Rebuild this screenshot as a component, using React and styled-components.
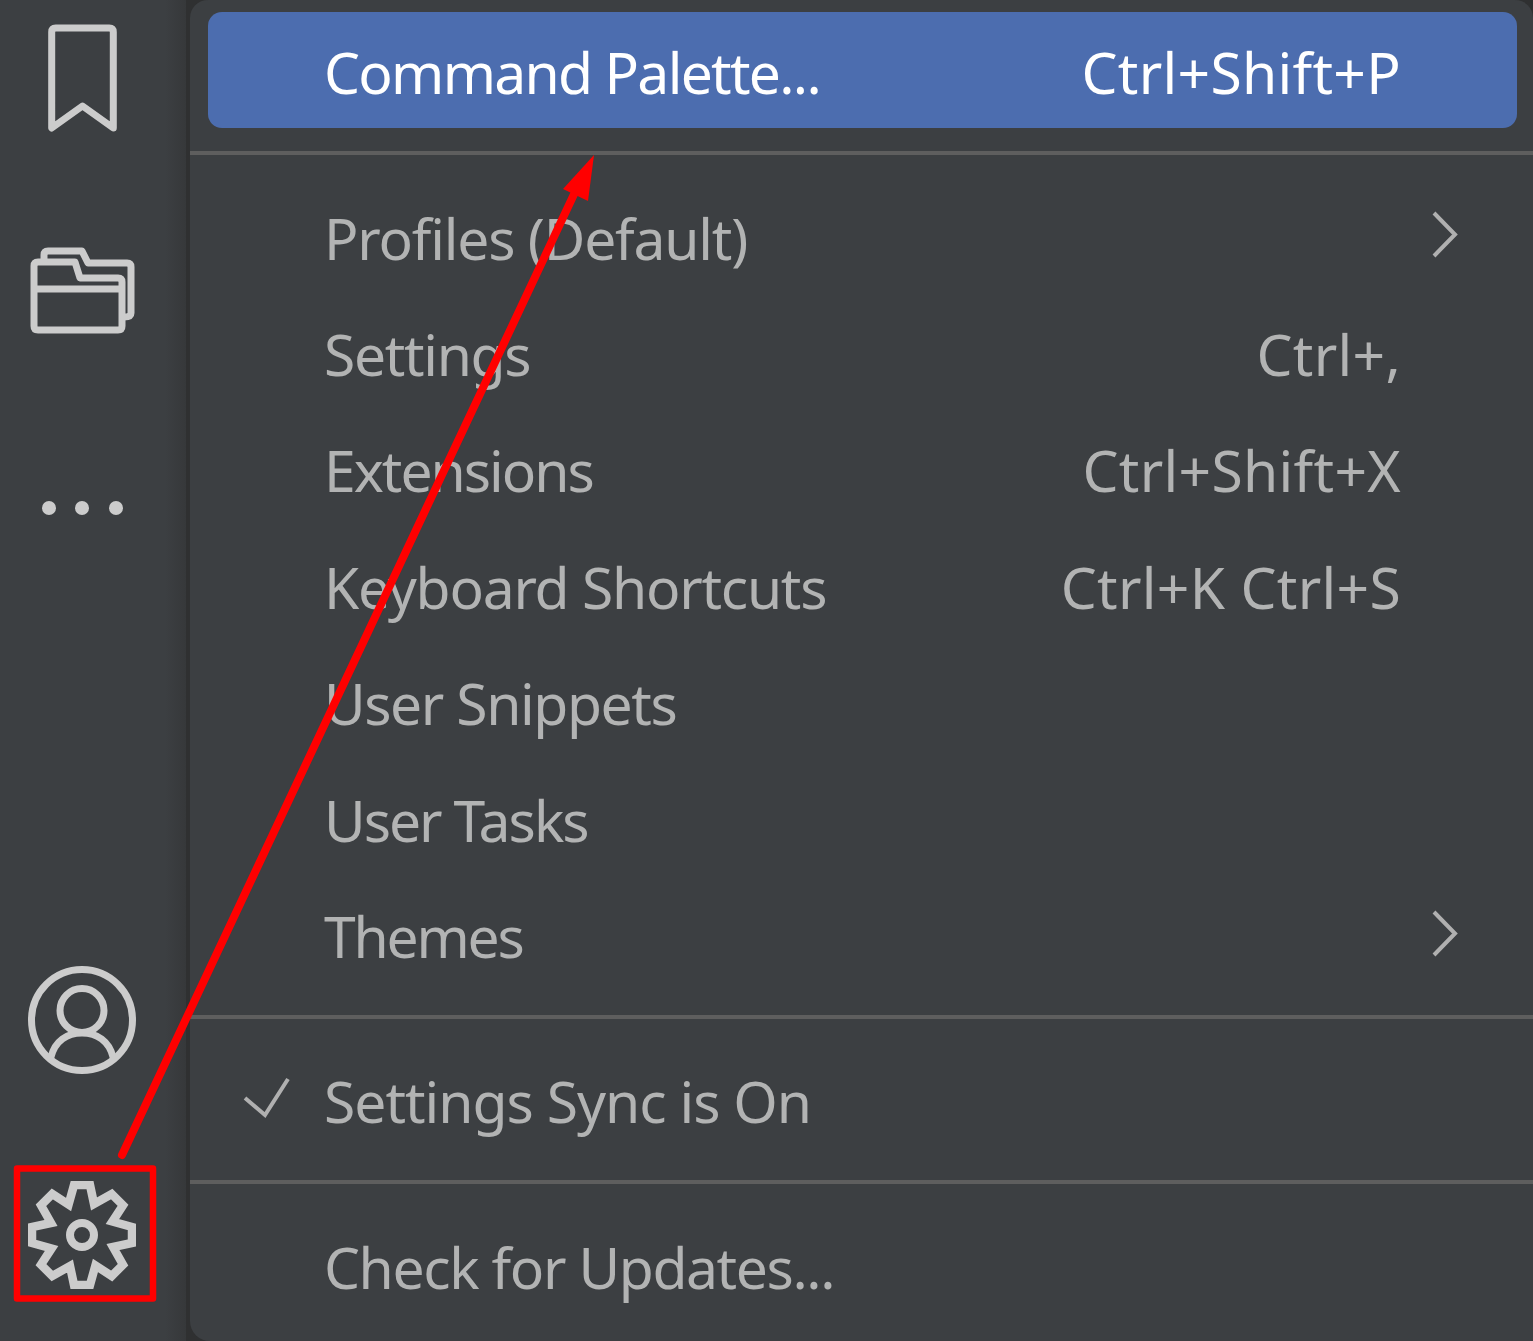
import React from "react";
import styled, { createGlobalStyle } from "styled-components";

const Global = createGlobalStyle`
  html, body { margin: 0; padding: 0; background: #2f3031; }
  #root { width: 1533px; height: 1341px; overflow: hidden; }
`;

const Window = styled.div`
  position: relative;
  display: flex;
  width: 1533px;
  height: 1341px;
  overflow: hidden;
  background: #2f3031;
  font-family: "Noto Sans", "Open Sans", sans-serif;
`;

const ActivityBar = styled.nav`
  flex: 0 0 186px;
  box-sizing: border-box;
  height: 100%;
  display: flex;
  flex-direction: column;
  justify-content: space-between;
  padding: 24px 0 52px 28px;
  background: linear-gradient(90deg, #3c3f42 0, #3c3f42 165px, #36383a 186px);
`;

const IconStack = styled.div`
  display: flex;
  flex-direction: column;
  gap: ${(p) => p.$gap}px;
`;

const BarIcon = styled.svg`
  display: block;
  width: 108px;
  height: 108px;
  fill: none;
  stroke: #cccccc;
  stroke-width: 7;
  stroke-linejoin: round;
  stroke-linecap: round;
`;

const GearOutline = styled.polygon`
  stroke-width: 8.5;
  stroke-linejoin: miter;
  stroke-miterlimit: 6;
`;

const GearHub = styled.circle`
  stroke-width: 8;
`;

const Menu = styled.section`
  flex: 1;
  margin-left: 4px;
  padding-top: 12px;
  display: flex;
  flex-direction: column;
  background: #3c3f42;
  border-radius: 18px 18px 0 20px;
`;

const Row = styled.div`
  display: grid;
  grid-template-columns: 116px 1fr auto 116px;
  align-items: center;
  box-sizing: border-box;
  height: ${(p) => (p.$active ? "116px" : "116.4px")};
  padding-top: ${(p) => (p.$active ? "4px" : "0")};
  margin: 0 16px 0 18px;
  border-radius: 14px;
  font-size: 57px;
  line-height: 1;
  color: ${(p) => (p.$active ? "#ffffff" : "#b2b3b3")};
  background: ${(p) => (p.$active ? "#4c6daf" : "transparent")};
`;

const Label = styled.span`
  grid-column: 2;
  white-space: nowrap;
  letter-spacing: ${(p) => p.$track}px;
`;

const Keys = styled.span`
  grid-column: 3;
  white-space: nowrap;
  text-align: right;
  letter-spacing: 0.3px;
`;

const Glyph = styled.svg`
  display: block;
  width: 116px;
  height: 116px;
  fill: none;
  stroke: #b0b0b0;
  stroke-width: 4;
  grid-column: ${(p) => p.$column};
  grid-row: 1;
`;

const Separator = styled.hr`
  flex: none;
  width: 100%;
  height: 4px;
  border: 0;
  background: #5e5e5e;
  margin: ${(p) => p.$margin};
`;

const Overlay = styled.svg`
  position: absolute;
  inset: 0;
  width: 1533px;
  height: 1341px;
  pointer-events: none;
`;

const gearPoints = (() => {
  const base = [[-8, -50], [8, -50], [12, -31]];
  const pts = [];
  for (let k = 0; k < 8; k++) {
    const a = (k * Math.PI) / 4;
    for (const [x, y] of base) {
      pts.push(`${(54 + x * Math.cos(a) - y * Math.sin(a)).toFixed(2)},${(54 + x * Math.sin(a) + y * Math.cos(a)).toFixed(2)}`);
    }
  }
  return pts.join(" ");
})();

const Chevron = () => (
  <Glyph $column={4} viewBox="0 0 116 116">
    <path d="M33 33 L54 54.5 L33 76" />
  </Glyph>
);

const Check = () => (
  <Glyph $column={1} viewBox="0 0 116 116">
    <path d="M37 54 L57 71 L80 35" />
  </Glyph>
);

const rows = [
  { label: "Profiles (Default)", track: -1.2, chevron: true },
  { label: "Settings", track: -1.33, keys: "Ctrl+," },
  { label: "Extensions", track: -2, keys: "Ctrl+Shift+X" },
  { label: "Keyboard Shortcuts", track: -1.25, keys: "Ctrl+K Ctrl+S" },
  { label: "User Snippets", track: -1.43 },
  { label: "User Tasks", track: -2 },
  { label: "Themes", track: -2.2, chevron: true },
];

export default function App() {
  return (
    <Window>
      <Global />
      <ActivityBar>
        <IconStack $gap={108}>
          <BarIcon viewBox="0 0 108 108">
            <path d="M23.7 8 Q23.7 4 27.7 4 H81.3 Q85.3 4 85.3 8 V104 L54.5 82 L23.7 104 Z" />
          </BarIcon>
          <BarIcon viewBox="0 0 108 108">
            <path d="M6 26 Q6 22 10 22 H47 L52 38 H90 Q94 38 94 42 V86 Q94 90 90 90 H10 Q6 90 6 86 Z M6 49 H94" />
            <path d="M16 21 V15 Q16 11 20 11 H54 L60 23 H99 Q103 23 103 27 V73 Q103 77 96 77" />
          </BarIcon>
          <BarIcon viewBox="0 0 108 108">
            <circle cx="21" cy="52" r="7" fill="#cccccc" stroke="none" />
            <circle cx="54" cy="52" r="7" fill="#cccccc" stroke="none" />
            <circle cx="88" cy="52" r="7" fill="#cccccc" stroke="none" />
          </BarIcon>
        </IconStack>
        <IconStack $gap={107}>
          <BarIcon viewBox="0 0 108 108">
            <circle cx="54" cy="54" r="50.5" />
            <circle cx="54" cy="44.5" r="22" />
            <path d="M23 91 C27 75 39 67 54 67 C69 67 81 75 85 91" />
          </BarIcon>
          <BarIcon viewBox="0 0 108 108">
            <GearOutline points={gearPoints} />
            <GearHub cx="54" cy="54" r="12" />
          </BarIcon>
        </IconStack>
      </ActivityBar>
      <Menu>
        <Row $active>
          <Label $track={-1.7}>Command Palette...</Label>
          <Keys>Ctrl+Shift+P</Keys>
        </Row>
        <Separator $margin="23px 0 25px" />
        {rows.map((r) => (
          <Row key={r.label}>
            <Label $track={r.track}>{r.label}</Label>
            {r.keys && <Keys>{r.keys}</Keys>}
            {r.chevron && <Chevron />}
          </Row>
        ))}
        <Separator $margin="20px 0 25px" />
        <Row>
          <Check />
          <Label $track={-1}>Settings Sync is On</Label>
        </Row>
        <Separator $margin="20px 0 25px" />
        <Row>
          <Label $track={-1.4}>Check for Updates...</Label>
        </Row>
      </Menu>
      <Overlay viewBox="0 0 1533 1341">
        <path d="M122 1155 L576 190" fill="none" stroke="#ff0000" strokeWidth="8" strokeLinecap="round" />
        <polygon points="594,155 563,189 588,201" fill="#ff0000" />
        <rect x="17" y="1168.5" width="136" height="130" fill="none" stroke="#ff0000" strokeWidth="6.5" strokeLinejoin="round" />
      </Overlay>
    </Window>
  );
}
